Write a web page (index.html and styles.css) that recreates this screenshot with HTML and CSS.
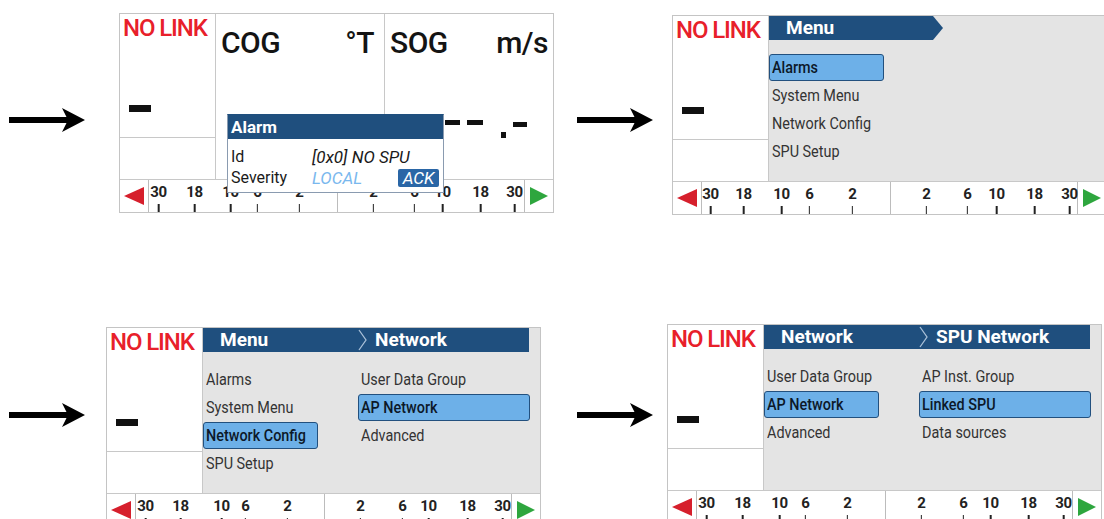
FILE: index.html
```html
<!DOCTYPE html>
<html>
<head>
<meta charset="utf-8">
<title>Menu navigation</title>
<link rel="stylesheet" href="styles.css">
</head>
<body>
<div class="sheet">

  <!-- Panel 1 -->
  <div class="cell c1">
    <svg class="arrow" viewBox="0 0 76 24"><rect x="0" y="9" width="62" height="6" fill="#000"/><polygon points="53,0 76,12 53,24 59,12" fill="#000"/></svg>
    <div class="screen">
      <div class="top">
        <div class="leftcol">
          <div class="lc-top"><div class="nolink">NO LINK</div><div class="bar"></div></div>
        </div>
        <div class="datacol cog">
          <div class="dlabel"><span>COG</span><span>°T</span></div>
        </div>
        <div class="datacol sog">
          <div class="dlabel"><span>SOG</span><span>m/s</span></div>
          <div class="bigval"><i class="dash d1"></i><i class="dash d2"></i><i class="dot"></i><i class="dash d3"></i></div>
        </div>
      </div>
      <div class="ruler">
        <div class="tcell"><svg class="tri" viewBox="0 0 20 18"><polygon points="20,0 20,18 0,9" fill="#d61f2c"/></svg></div>
        <div class="scale">
          <div class="mark" style="left:calc(50% - 178px)"><span class="num">30</span><i class="tick"></i></div>
          <div class="mark" style="left:calc(50% - 142px)"><span class="num">18</span><i class="tick"></i></div>
          <div class="mark" style="left:calc(50% - 106px)"><span class="num">10</span><i class="tick"></i></div>
          <div class="mark" style="left:calc(50% - 79px)"><span class="num">6</span><i class="tick"></i></div>
          <div class="mark" style="left:calc(50% - 37px)"><span class="num">2</span><i class="tick"></i></div>
          <div class="mark" style="left:calc(50% + 37px)"><span class="num">2</span><i class="tick"></i></div>
          <div class="mark" style="left:calc(50% + 78px)"><span class="num">6</span><i class="tick"></i></div>
          <div class="mark" style="left:calc(50% + 106px)"><span class="num">10</span><i class="tick"></i></div>
          <div class="mark" style="left:calc(50% + 144px)"><span class="num">18</span><i class="tick"></i></div>
          <div class="mark" style="left:calc(50% + 178px)"><span class="num">30</span><i class="tick"></i></div>
        </div>
        <div class="tcell"><svg class="tri" viewBox="0 0 20 18"><polygon points="1,0 1,18 19,9" fill="#2ea63e"/></svg></div>
      </div>
      <div class="popup">
        <div class="popup-h">Alarm</div>
        <div class="prow"><span class="plabel">Id</span><span class="pval">[0x0] NO SPU</span></div>
        <div class="prow"><span class="plabel">Severity</span><span class="pval local">LOCAL</span><span class="ack">ACK</span></div>
      </div>
    </div>
  </div>

  <!-- Panel 2 -->
  <div class="cell c2">
    <svg class="arrow" viewBox="0 0 76 24"><rect x="0" y="9" width="62" height="6" fill="#000"/><polygon points="53,0 76,12 53,24 59,12" fill="#000"/></svg>
    <div class="screen">
      <div class="top">
        <div class="leftcol">
          <div class="lc-top"><div class="nolink">NO LINK</div><div class="bar"></div></div>
        </div>
        <div class="menu">
          <div class="hdr hdr-tip"><span class="crumb">Menu</span></div>
          <div class="lists">
            <div class="list l1">
              <div class="item sel"><span>Alarms</span></div>
              <div class="item"><span>System Menu</span></div>
              <div class="item"><span>Network Config</span></div>
              <div class="item"><span>SPU Setup</span></div>
            </div>
          </div>
        </div>
      </div>
      <div class="ruler">
        <div class="tcell"><svg class="tri" viewBox="0 0 20 18"><polygon points="20,0 20,18 0,9" fill="#d61f2c"/></svg></div>
        <div class="scale">
          <div class="mark" style="left:calc(50% - 179px)"><span class="num">30</span><i class="tick"></i></div>
          <div class="mark" style="left:calc(50% - 146px)"><span class="num">18</span><i class="tick"></i></div>
          <div class="mark" style="left:calc(50% - 108px)"><span class="num">10</span><i class="tick"></i></div>
          <div class="mark" style="left:calc(50% - 80px)"><span class="num">6</span><i class="tick"></i></div>
          <div class="mark" style="left:calc(50% - 37px)"><span class="num">2</span><i class="tick"></i></div>
          <div class="mark" style="left:calc(50% + 37px)"><span class="num">2</span><i class="tick"></i></div>
          <div class="mark" style="left:calc(50% + 78px)"><span class="num">6</span><i class="tick"></i></div>
          <div class="mark" style="left:calc(50% + 107px)"><span class="num">10</span><i class="tick"></i></div>
          <div class="mark" style="left:calc(50% + 145px)"><span class="num">18</span><i class="tick"></i></div>
          <div class="mark" style="left:calc(50% + 180px)"><span class="num">30</span><i class="tick"></i></div>
        </div>
        <div class="tcell"><svg class="tri" viewBox="0 0 20 18"><polygon points="1,0 1,18 19,9" fill="#2ea63e"/></svg></div>
      </div>
    </div>
  </div>

  <!-- Panel 3 -->
  <div class="cell c3">
    <svg class="arrow" viewBox="0 0 76 24"><rect x="0" y="9" width="62" height="6" fill="#000"/><polygon points="53,0 76,12 53,24 59,12" fill="#000"/></svg>
    <div class="screen">
      <div class="top">
        <div class="leftcol">
          <div class="lc-top"><div class="nolink">NO LINK</div><div class="bar"></div></div>
        </div>
        <div class="menu">
          <div class="hdr hdr-full">
            <span class="crumb">Menu</span>
            <span class="crumb crumb2"><svg class="chev" viewBox="0 0 10 24"><polyline points="1,2 8,12 1,22" fill="none" stroke="#a9c0d8" stroke-width="1.3"/></svg>Network</span>
          </div>
          <div class="lists">
            <div class="list l1">
              <div class="item"><span>Alarms</span></div>
              <div class="item"><span>System Menu</span></div>
              <div class="item sel"><span>Network Config</span></div>
              <div class="item"><span>SPU Setup</span></div>
            </div>
            <div class="list l2">
              <div class="item"><span>User Data Group</span></div>
              <div class="item sel"><span>AP Network</span></div>
              <div class="item"><span>Advanced</span></div>
            </div>
          </div>
        </div>
      </div>
      <div class="ruler">
        <div class="tcell"><svg class="tri" viewBox="0 0 20 18"><polygon points="20,0 20,18 0,9" fill="#d61f2c"/></svg></div>
        <div class="scale">
          <div class="mark" style="left:calc(50% - 178px)"><span class="num">30</span><i class="tick"></i></div>
          <div class="mark" style="left:calc(50% - 143px)"><span class="num">18</span><i class="tick"></i></div>
          <div class="mark" style="left:calc(50% - 102px)"><span class="num">10</span><i class="tick"></i></div>
          <div class="mark" style="left:calc(50% - 78px)"><span class="num">6</span><i class="tick"></i></div>
          <div class="mark" style="left:calc(50% - 36px)"><span class="num">2</span><i class="tick"></i></div>
          <div class="mark" style="left:calc(50% + 37px)"><span class="num">2</span><i class="tick"></i></div>
          <div class="mark" style="left:calc(50% + 79px)"><span class="num">6</span><i class="tick"></i></div>
          <div class="mark" style="left:calc(50% + 105px)"><span class="num">10</span><i class="tick"></i></div>
          <div class="mark" style="left:calc(50% + 144px)"><span class="num">18</span><i class="tick"></i></div>
          <div class="mark" style="left:calc(50% + 179px)"><span class="num">30</span><i class="tick"></i></div>
        </div>
        <div class="tcell"><svg class="tri" viewBox="0 0 20 18"><polygon points="1,0 1,18 19,9" fill="#2ea63e"/></svg></div>
      </div>
    </div>
  </div>

  <!-- Panel 4 -->
  <div class="cell c4">
    <svg class="arrow" viewBox="0 0 76 24"><rect x="0" y="9" width="62" height="6" fill="#000"/><polygon points="53,0 76,12 53,24 59,12" fill="#000"/></svg>
    <div class="screen">
      <div class="top">
        <div class="leftcol">
          <div class="lc-top"><div class="nolink">NO LINK</div><div class="bar"></div></div>
        </div>
        <div class="menu">
          <div class="hdr hdr-full">
            <span class="crumb">Network</span>
            <span class="crumb crumb2"><svg class="chev" viewBox="0 0 10 24"><polyline points="1,2 8,12 1,22" fill="none" stroke="#a9c0d8" stroke-width="1.3"/></svg>SPU Network</span>
          </div>
          <div class="lists">
            <div class="list l1">
              <div class="item"><span>User Data Group</span></div>
              <div class="item sel"><span>AP Network</span></div>
              <div class="item"><span>Advanced</span></div>
            </div>
            <div class="list l2">
              <div class="item"><span>AP Inst. Group</span></div>
              <div class="item sel"><span>Linked SPU</span></div>
              <div class="item"><span>Data sources</span></div>
            </div>
          </div>
        </div>
      </div>
      <div class="ruler">
        <div class="tcell"><svg class="tri" viewBox="0 0 20 18"><polygon points="20,0 20,18 0,9" fill="#d61f2c"/></svg></div>
        <div class="scale">
          <div class="mark" style="left:calc(50% - 178px)"><span class="num">30</span><i class="tick"></i></div>
          <div class="mark" style="left:calc(50% - 142px)"><span class="num">18</span><i class="tick"></i></div>
          <div class="mark" style="left:calc(50% - 105px)"><span class="num">10</span><i class="tick"></i></div>
          <div class="mark" style="left:calc(50% - 79px)"><span class="num">6</span><i class="tick"></i></div>
          <div class="mark" style="left:calc(50% - 37px)"><span class="num">2</span><i class="tick"></i></div>
          <div class="mark" style="left:calc(50% + 37px)"><span class="num">2</span><i class="tick"></i></div>
          <div class="mark" style="left:calc(50% + 79px)"><span class="num">6</span><i class="tick"></i></div>
          <div class="mark" style="left:calc(50% + 106px)"><span class="num">10</span><i class="tick"></i></div>
          <div class="mark" style="left:calc(50% + 144px)"><span class="num">18</span><i class="tick"></i></div>
          <div class="mark" style="left:calc(50% + 179px)"><span class="num">30</span><i class="tick"></i></div>
        </div>
        <div class="tcell"><svg class="tri" viewBox="0 0 20 18"><polygon points="1,0 1,18 19,9" fill="#2ea63e"/></svg></div>
      </div>
    </div>
  </div>

</div>
</body>
</html>
```
FILE: styles.css
```css
* { box-sizing: border-box; margin: 0; padding: 0; }
html, body { width: 1104px; height: 519px; overflow: hidden; background: #fff; }
body { font-family: Roboto, "Liberation Sans", sans-serif; color: #222; }

.sheet {
  display: grid;
  grid-template-columns: 568px 536px;
  grid-template-rows: 312px 207px;
  width: 1104px;
  height: 519px;
  overflow: hidden;
}
.cell { display: flex; align-items: flex-start; min-width: 0; }

.arrow { flex: none; width: 76px; height: 24px; margin-left: 9px; }
.c1 .arrow, .c2 .arrow { margin-top: 108px; }
.c3 .arrow, .c4 .arrow { margin-top: 91px; }

.screen {
  flex: none;
  position: relative;
  width: 435px;
  height: 200px;
  border: 1px solid #c4c4c4;
  background: #fff;
  display: flex;
  flex-direction: column;
}
.c1 .screen { margin: 13px 0 0 34px; }
.c2 .screen { margin: 15px 0 0 19px; }
.c3 .screen { margin: 15px 0 0 21px; }
.c4 .screen { margin: 12px 0 0 14px; }

.top { height: 165px; display: flex; flex: none; }

/* left status column */
.leftcol { width: 96px; flex: none; border-right: 1px solid #c8c8c8; }
.lc-top { height: 124px; border-bottom: 1px solid #c8c8c8; padding: 2px 0 0 3px; }
.nolink {
  font-size: 24px;
  line-height: 24px;
  font-weight: 500;
  color: #e8202a;
  letter-spacing: -1.1px;
  white-space: nowrap;
}
.bar { width: 22px; height: 7px; background: #111; margin: 65px 0 0 6px; }

/* data columns (panel 1) */
.datacol { display: flex; flex-direction: column; }
.cog { width: 169px; flex: none; border-right: 1px solid #c8c8c8; padding: 14px 10px 0 5px; }
.sog { flex: 1; padding: 14px 5px 0 5px; }
.dlabel {
  display: flex;
  justify-content: space-between;
  font-size: 30px;
  line-height: 30px;
  font-weight: 500;
  letter-spacing: -0.5px;
  color: #141414;
}
.bigval { display: flex; align-items: flex-start; margin: 62px 0 0 55px; }
.dash { display: block; height: 5px; background: #111; }
.d1 { width: 15px; }
.d2 { width: 16px; margin-left: 7px; }
.d3 { width: 14px; margin: 2px 0 0 7px; }
.dot { display: block; width: 5px; height: 6px; background: #111; margin: 12px 0 0 18px; }

/* alarm popup */
.popup {
  position: absolute;
  left: 107px;
  top: 100px;
  width: 217px;
  height: 79px;
  background: #fff;
  border: 1px solid #8a9bb0;
  border-top-color: #1f4f7e;
  z-index: 2;
}
.popup-h {
  height: 24px;
  background: #1f4f7e;
  color: #fff;
  font-weight: 700;
  font-size: 17px;
  line-height: 24px;
  padding-left: 3px;
}
.popup-h + .prow { margin-top: 7px; }
.prow {
  display: flex;
  align-items: center;
  height: 21px;
  padding-left: 3px;
  font-size: 16px;
  color: #1a1a1a;
  white-space: nowrap;
}
.plabel { width: 81px; flex: none; }
.pval { font-style: italic; font-size: 17px; }
.local { color: #7ab8ee; }
.ack {
  margin-left: auto;
  margin-right: 4px;
  width: 41px;
  height: 18px;
  background: #2a66a6;
  color: #fff;
  font-style: italic;
  font-size: 17px;
  line-height: 18px;
  text-align: center;
  border-radius: 2px;
}

/* bottom ruler */
.ruler { flex: 1; display: flex; border-top: 1px solid #c8c8c8; }
.tcell { width: 28px; flex: none; display: flex; align-items: center; justify-content: center; }
.tri { width: 20px; height: 18px; }
.scale {
  flex: 1;
  position: relative;
  border-left: 1px solid #bcbcbc;
  border-right: 1px solid #bcbcbc;
}
.scale::before {
  content: "";
  position: absolute;
  left: 50%;
  top: 0;
  bottom: 0;
  border-left: 1px solid #bcbcbc;
}
.mark {
  position: absolute;
  top: 5px;
  bottom: 0;
  transform: translateX(-50%);
  display: flex;
  flex-direction: column;
  align-items: center;
}
.num { font-size: 15px; line-height: 15px; font-weight: 700; color: #222; letter-spacing: -0.3px; }
.tick { display: block; margin-top: auto; width: 1.5px; height: 8px; background: #222; }

/* menu area */
.menu { flex: 1; min-width: 0; background: #e4e4e4; }
.hdr {
  height: 24px;
  background: #1f4f7e;
  color: #fff;
  font-weight: 700;
  font-size: 19px;
  line-height: 24px;
  display: flex;
}
.hdr-tip { width: 174px; clip-path: polygon(0 0, 164px 0, 100% 50%, 164px 100%, 0 100%); }
.hdr-full { width: 326px; }
.crumb { width: 155px; flex: none; padding-left: 17px; display: flex; align-items: center; gap: 7px; white-space: nowrap; }
.crumb2 { padding-left: 0; width: auto; }
.chev { width: 10px; height: 24px; flex: none; }

.lists { display: flex; margin-top: 14px; }
.list { display: flex; flex-direction: column; gap: 1px; }
.l1 { width: 155px; flex: none; }
.l1 .item { width: 115px; }
.l2 { width: 172px; flex: none; }
.item {
  height: 27px;
  border: 1px solid transparent;
  border-radius: 3px;
  padding-left: 2px;
  display: flex;
  align-items: center;
  font-size: 16px;
  color: #333;
  white-space: nowrap;
}
.item span { display: inline-block; transform: scaleX(.9); transform-origin: 0 50%; }
.item.sel { background: #6db0e8; border-color: #22507e; color: #0c1828; font-weight: 500; }
```
